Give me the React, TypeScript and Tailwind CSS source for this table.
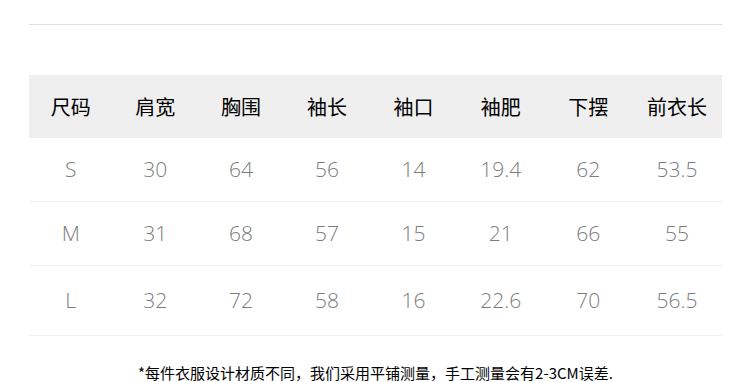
import React from 'react';

const headers = ['尺码', '肩宽', '胸围', '袖长', '袖口', '袖肥', '下摆', '前衣长'];

const rows: { cells: string[]; height: string }[] = [
  { cells: ['S', '30', '64', '56', '14', '19.4', '62', '53.5'], height: 'h-[64px]' },
  { cells: ['M', '31', '68', '57', '15', '21', '66', '55'], height: 'h-[64px]' },
  { cells: ['L', '32', '72', '58', '16', '22.6', '70', '56.5'], height: 'h-[70px]' },
];

// column widths follow the reference table's auto layout
const cols = 'grid-cols-[83.5px_85.5px_86px_86px_87px_87.5px_87.5px_90px]';

export default function App() {
  return (
    <div className="w-[750px] h-[382px] bg-white pl-[29px] pr-[28px] pt-[24px] overflow-hidden">
      <div className="border-t border-[#e0e0e0]" />

      <div className={`mt-[50px] grid ${cols} h-[63px] items-center bg-[#efefef] text-[20px] text-black font-['Noto_Sans_CJK_SC',sans-serif]`}>
        {headers.map(h => (
          <div key={h} className="text-center leading-none">{h}</div>
        ))}
      </div>

      {rows.map(row => (
        <div
          key={row.cells[0]}
          className={`grid ${cols} items-center border-b border-[#efefef] ${row.height} text-[21px] font-light text-[#7c7c7c] font-['Open_Sans',sans-serif]`}
        >
          {row.cells.map((c, i) => (
            <div key={i} className="text-center leading-none">{c}</div>
          ))}
        </div>
      ))}

      <p className="mt-[27px] text-center text-[15px] leading-[20px] text-black font-['Noto_Sans_CJK_SC',sans-serif]">
        *每件衣服设计材质不同，我们采用平铺测量，手工测量会有2-3CM误差.
      </p>
    </div>
  );
}
